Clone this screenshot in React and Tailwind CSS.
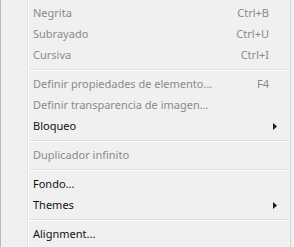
import React from 'react';

const grupos = [
  [
    { texto: 'Negrita', atajo: 'Ctrl+B', off: true },
    { texto: 'Subrayado', atajo: 'Ctrl+U', off: true },
    { texto: 'Cursiva', atajo: 'Ctrl+I', off: true },
  ],
  [
    { texto: 'Definir propiedades de elemento...', atajo: 'F4', off: true },
    { texto: 'Definir transparencia de imagen...', off: true },
    { texto: 'Bloqueo', sub: true },
  ],
  [{ texto: 'Duplicador infinito', off: true }],
  [
    { texto: 'Fondo...' },
    { texto: 'Themes', sub: true },
  ],
  [{ texto: 'Alignment...' }],
];

function Flecha() {
  return (
    <svg width="4" height="7" viewBox="0 0 4 7" className="block">
      <path d="M0 0 L4 3.5 L0 7 Z" fill="#1a1a1a" />
    </svg>
  );
}

function Item({ texto, atajo, off, sub }) {
  return (
    <div className={`h-[21px] flex items-center pl-[33px] pr-[22px] text-[11px] ${off ? 'text-[#8a8a8a]' : 'text-[#111]'}`}>
      <span className="flex-1 whitespace-nowrap">{texto}</span>
      {atajo && <span className="whitespace-nowrap">{atajo}</span>}
      {sub && <span className="-mr-[8px]"><Flecha /></span>}
    </div>
  );
}

export default function App() {
  return (
    <div className="w-[294px] h-[247px] overflow-hidden bg-[#f0f0f0] relative" style={{ fontFamily: '"Segoe UI", "Noto Sans", sans-serif' }}>
      {/* borde izquierdo y línea del canal de iconos */}
      <div className="absolute left-0 top-0 bottom-0 w-px bg-[#b8b8b8]" />
      <div className="absolute left-[27px] top-0 bottom-0 w-px bg-[#e2e3e3]" />
      <div className="absolute left-[28px] top-0 bottom-0 w-px bg-white" />
      <div className="absolute right-[3px] top-0 bottom-0 w-px bg-[#d4d4d4]" />

      <div className="pt-[3px] pr-[3px]">
        {grupos.map((g, i) => (
          <div key={i}>
            {i > 0 && (
              <div className="h-[8px] flex flex-col justify-center pl-[29px]">
                <div className="h-px bg-[#e0e0e0]" />
                <div className="h-px bg-white" />
              </div>
            )}
            {g.map((it) => <Item key={it.texto} {...it} />)}
          </div>
        ))}
      </div>
    </div>
  );
}
